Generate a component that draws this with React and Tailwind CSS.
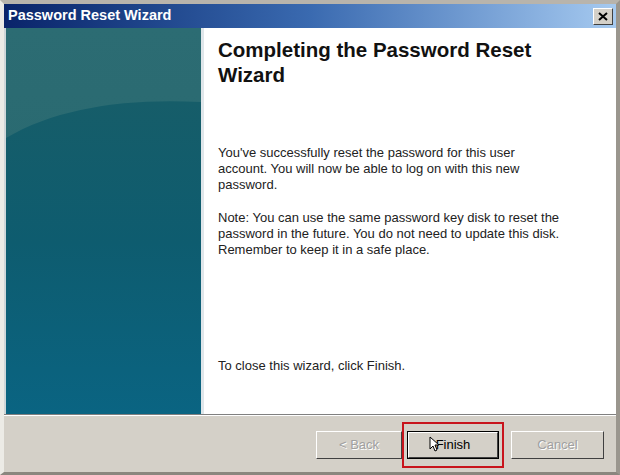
import React from 'react';

const font = { fontFamily: '"Liberation Sans", Arial, sans-serif' };

const WizardButton = ({ children, disabled, isDefault, className = '' }) => (
  <div
    className={`h-[28px] flex items-center justify-center text-[13px] ${
      isDefault ? 'border border-black' : ''
    } ${className}`}
  >
    <div
      className={`w-full h-full flex items-center justify-center bg-[#d4d0c8] border border-t-white border-l-white border-r-[#404040] border-b-[#404040] ${
        disabled ? 'text-[#a0a0a0] [text-shadow:1px_1px_0_#ffffff]' : 'text-black'
      }`}
    >
      {children}
    </div>
  </div>
);

const SidePanel = () => (
  <div className="w-[195px] h-full">
    <svg width="195" height="386" viewBox="0 0 195 386" preserveAspectRatio="none">
      <defs>
        <linearGradient id="top" x1="0" y1="0" x2="0" y2="1">
          <stop offset="0" stopColor="#2c6c73" />
          <stop offset="1" stopColor="#26666d" />
        </linearGradient>
        <linearGradient id="low" x1="0" y1="0" x2="0" y2="1">
          <stop offset="0" stopColor="#165d69" />
          <stop offset="0.45" stopColor="#0e5c6f" />
          <stop offset="1" stopColor="#0a6482" />
        </linearGradient>
      </defs>
      <rect width="195" height="386" fill="url(#top)" />
      <path d="M0 110 C50 80 120 70 195 74 L195 386 L0 386 Z" fill="url(#low)" />
    </svg>
  </div>
);

export default function App() {
  return (
    <div className="w-[620px] h-[475px] bg-[#d4d0c8] overflow-hidden" style={font}>
      <div className="h-full flex flex-col border-t-[4px] border-t-[#b8b4ac] border-l-[4px] border-l-[#ecebe6] border-r-[4px] border-r-[#9a968e] border-b-[3px] border-b-[#8a867e]">
        {/* title bar */}
        <div className="h-[24px] flex items-center justify-between pl-[4px] pr-[3px] bg-gradient-to-r from-[#0a246a] via-[#3a6ab0] to-[#a6caf0]">
          <span className="text-white font-bold text-[14.5px]">Password Reset Wizard</span>
          <div className="w-[20px] h-[17px] bg-[#d4d0c8] border border-t-white border-l-white border-r-[#404040] border-b-[#404040] flex items-center justify-center">
            <svg width="10" height="9" viewBox="0 0 10 9">
              <path d="M1 1 L9 8 M9 1 L1 8" stroke="black" strokeWidth="2" />
            </svg>
          </div>
        </div>

        {/* body */}
        <div className="h-[386px] flex bg-white">
          <div className="pl-[2px] bg-[#cfd6d8]">
            <SidePanel />
          </div>
          <div className="w-[3px] bg-[#dfe6ea]" />
          <div className="flex-1 flex flex-col pl-[14px] pr-[4px] pt-[9px] pb-[40px] text-black">
            <h1 className="text-[20.5px] leading-[25px] font-bold text-[#111]">
              Completing the Password Reset
              <br />
              Wizard
            </h1>
            <p className="mt-[58px] text-[13px] leading-[16px] text-[#222]">
              You've successfully reset the password for this user
              <br />
              account. You will now be able to log on with this new
              <br />
              password.
            </p>
            <p className="mt-[17px] text-[13px] leading-[16px] text-[#222]">
              Note: You can use the same password key disk to reset the
              <br />
              password in the future. You do not need to update this disk.
              <br />
              Remember to keep it in a safe place.
            </p>
            <p className="mt-auto text-[13px] leading-[16px] text-[#222]">To close this wizard, click Finish.</p>
          </div>
        </div>

        {/* separator */}
        <div className="h-px bg-[#808080]" />
        <div className="h-px bg-white" />

        {/* buttons */}
        <div className="relative flex-1 flex items-start pt-[15px] pl-[312px]">
          <WizardButton disabled className="w-[86px]">&lt; Back</WizardButton>
          <WizardButton isDefault className="w-[92px] ml-[5px]">Finish</WizardButton>
          <WizardButton disabled className="w-[93px] ml-[12px]">Cancel</WizardButton>

          {/* annotation box */}
          <div className="absolute left-[398px] top-[6px] w-[102px] h-[46px] border-2 border-[#c8141c]" />
          {/* mouse cursor */}
          <svg className="absolute left-[425px] top-[20px]" width="10" height="16" viewBox="0 0 10 16">
            <path d="M1 1 L1 13 L4 10 L6 15 L8 14 L6 9 L10 9 Z" fill="white" stroke="black" strokeWidth="1" />
          </svg>
        </div>
      </div>
    </div>
  );
}
